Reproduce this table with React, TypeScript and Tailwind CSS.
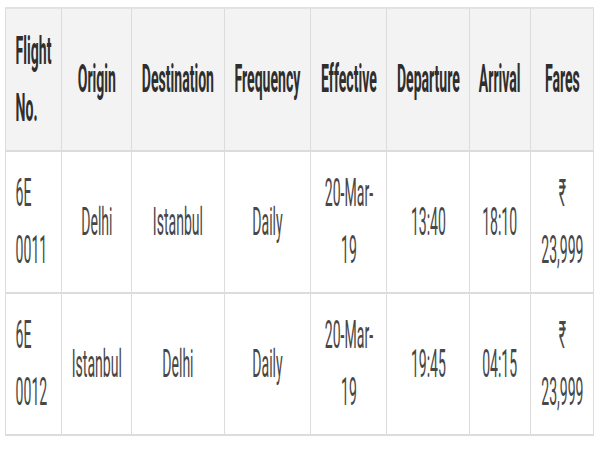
import React from "react";

type Cell = React.ReactNode;

const headers: Cell[] = [
  <>Flight<br />No.</>,
  "Origin",
  "Destination",
  "Frequency",
  "Effective",
  "Departure",
  "Arrival",
  "Fares",
];

const rows: Cell[][] = [
  [<>6E<br />0011</>, "Delhi", "Istanbul", "Daily", <>20-Mar-<br />19</>, "13:40", "18:10", <>₹<br />23,999</>],
  [<>6E<br />0012</>, "Istanbul", "Delhi", "Daily", <>20-Mar-<br />19</>, "19:45", "04:15", <>₹<br />23,999</>],
];

const widths = ["w-[56px]", "w-[70px]", "w-[93px]", "w-[86px]", "w-[76px]", "w-[83px]", "w-[61px]", "w-[63px]"];

function Squeeze({ children, left }: { children: React.ReactNode; left?: boolean }) {
  return (
    <div
      className={`w-[270.27%] ml-[-85.135%] scale-x-[0.37] whitespace-nowrap leading-[57px] text-[38px] ${
        left ? "text-left" : "text-center"
      }`}
    >
      {children}
    </div>
  );
}

export default function App() {
  return (
    <div className="w-[600px] h-[450px] overflow-hidden bg-white" style={{ fontFamily: "Roboto, 'Noto Sans', sans-serif" }}>
      <table className="table-fixed border-collapse w-[589px] ml-[5px] mt-[7px]">
        <colgroup>
          {widths.map((w, i) => (
            <col key={i} className={w} />
          ))}
        </colgroup>
        <thead>
          <tr className="h-[143px] bg-[#f3f3f3]">
            {headers.map((h, i) => (
              <th
                key={i}
                className={`border border-[#dcdcdc] border-t-2 border-b-2 border-t-[#e2e2e2] align-middle font-bold text-[#2e2e2e] ${
                  i === 0 ? "pl-[10px] pr-[2px]" : "px-[2px]"
                }`}
              >
                <Squeeze left={i === 0}>{h}</Squeeze>
              </th>
            ))}
          </tr>
        </thead>
        <tbody>
          {rows.map((r, ri) => (
            <tr key={ri} className="h-[142px] bg-white">
              {r.map((c, i) => (
                <td
                  key={i}
                  className={`border border-[#dcdcdc] border-b-2 align-middle font-normal text-[#474747] ${
                    i === 0 ? "pl-[10px] pr-[2px]" : "px-[2px]"
                  }`}
                >
                  <Squeeze left={i === 0}>{c}</Squeeze>
                </td>
              ))}
            </tr>
          ))}
        </tbody>
      </table>
    </div>
  );
}
